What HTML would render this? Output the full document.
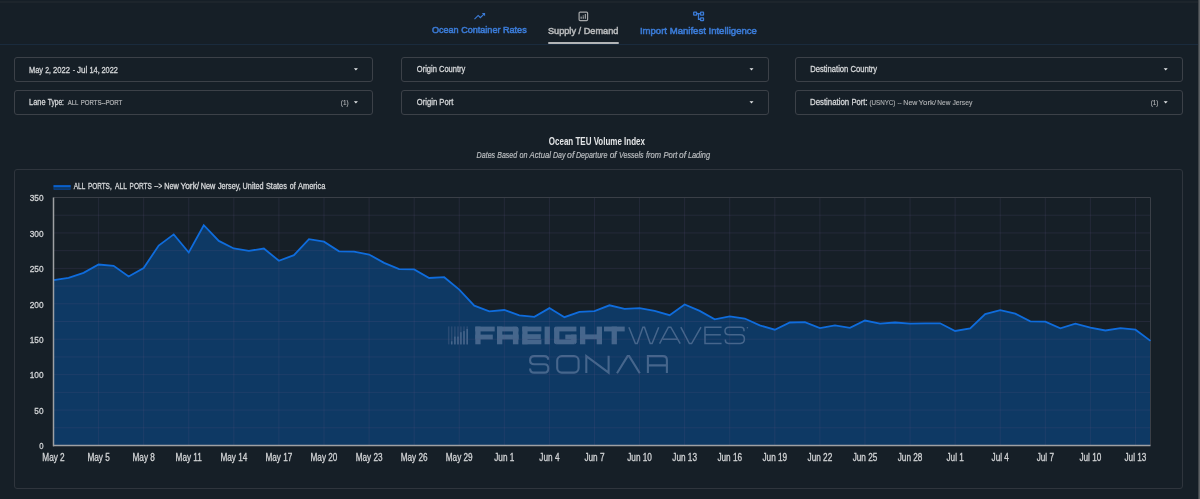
<!DOCTYPE html>
<html><head><meta charset="utf-8">
<style>
html,body{margin:0;padding:0;}
body{width:1200px;height:499px;overflow:hidden;background:#161f27;position:relative;font-family:"Liberation Sans",sans-serif;}
.topline{position:absolute;left:0;top:1px;width:1200px;height:2px;background:#1d252c;}
.navsep{position:absolute;left:0;top:44px;width:1200px;height:1px;background:#1a2b3d;}
.uline{position:absolute;left:548px;top:41.5px;width:71px;height:2.5px;border-radius:2px;background:#b2b4b6;}
.box{position:absolute;box-sizing:border-box;border:1.4px solid #3c4148;border-radius:3px;}
.card{position:absolute;box-sizing:border-box;border:1px solid #2f353d;border-radius:3px;left:13.5px;top:169px;width:1169.5px;height:320px;}
.sb{position:absolute;left:1198px;top:0;width:2px;height:499px;background:linear-gradient(90deg,#2c3237 0%,#5c6064 60%,#5c6064 100%);}
svg{position:absolute;left:0;top:0;will-change:transform;}

</style></head>
<body>
<div class="topline"></div>
<div class="navsep"></div>
<div class="uline"></div>
<div class="box" style="left:13.5px;top:57px;width:359.5px;height:25px"></div>
<div class="box" style="left:13.5px;top:90px;width:359.5px;height:25px"></div>
<div class="box" style="left:401px;top:57px;width:368px;height:25px"></div>
<div class="box" style="left:401px;top:90px;width:368px;height:25px"></div>
<div class="box" style="left:794.5px;top:57px;width:388.5px;height:25px"></div>
<div class="box" style="left:794.5px;top:90px;width:388.5px;height:25px"></div>
<div class="card"></div>
<div class="sb"></div>
<svg width="1200" height="499" viewBox="0 0 1200 499" style="font-family:'Liberation Sans',sans-serif">
<!-- nav icons -->
<path transform="translate(473.0,9.6) scale(0.55)" fill="#3b7bd6" d="M16 6l2.29 2.29-4.88 4.88-4-4L2 16.59 3.41 18l6-6 4 4 6.3-6.29L22 12V6z"/>
<rect x="579.1" y="12.1" width="8.5" height="8.5" rx="1" fill="none" stroke="#a6a8aa" stroke-width="1.2"/>
<g fill="#a6a8aa"><rect x="580.6" y="16.6" width="1.1" height="2.2"/><rect x="582.7" y="15.2" width="1.1" height="0.6"/><rect x="582.7" y="16.3" width="1.1" height="2.5"/><rect x="584.8" y="14.0" width="1.1" height="4.8"/></g>
<g fill="none" stroke="#3b7bd6" stroke-width="1.3">
<rect x="693.7" y="12.2" width="2.9" height="2.9" rx="0.4"/>
<rect x="700.6" y="12.2" width="2.9" height="2.9" rx="0.4"/>
<rect x="700.6" y="17.8" width="2.9" height="2.9" rx="0.4"/>
<polyline points="696.6,13.65 700.6,13.65"/>
<polyline points="698.5,13.65 698.5,19.25 700.6,19.25"/>
</g>
<text x="431.9" y="33.4" textLength="94.8" lengthAdjust="spacingAndGlyphs" fill="#3b7bd6" font-size="9.6" font-weight="normal" font-style="normal" text-anchor="start" stroke="#3b7bd6" stroke-width="0.55">Ocean Container Rates</text>
<text x="547.9" y="33.5" textLength="70.5" lengthAdjust="spacingAndGlyphs" fill="#b6b8ba" font-size="9.6" font-weight="normal" font-style="normal" text-anchor="start" stroke="#b6b8ba" stroke-width="0.55">Supply / Demand</text>
<text x="639.9" y="33.5" textLength="117" lengthAdjust="spacingAndGlyphs" fill="#3b7bd6" font-size="9.6" font-weight="normal" font-style="normal" text-anchor="start" stroke="#3b7bd6" stroke-width="0.55">Import Manifest Intelligence</text>
<!-- dropdown texts -->
<text x="29.0" y="72.5" textLength="14.0" lengthAdjust="spacingAndGlyphs" fill="#d6d8da" font-size="9.3" font-weight="normal" font-style="normal" text-anchor="start" stroke="#d6d8da" stroke-width="0.3">May</text>
<text x="45.2" y="72.5" textLength="5.7" lengthAdjust="spacingAndGlyphs" fill="#d6d8da" font-size="9.3" font-weight="normal" font-style="normal" text-anchor="start" stroke="#d6d8da" stroke-width="0.3">2,</text>
<text x="53.1" y="72.5" textLength="17.0" lengthAdjust="spacingAndGlyphs" fill="#d6d8da" font-size="9.3" font-weight="normal" font-style="normal" text-anchor="start" stroke="#d6d8da" stroke-width="0.3">2022</text>
<text x="72.7" y="72.5" textLength="2.4" lengthAdjust="spacingAndGlyphs" fill="#d6d8da" font-size="9.3" font-weight="normal" font-style="normal" text-anchor="start" stroke="#d6d8da" stroke-width="0.3">-</text>
<text x="76.9" y="72.5" textLength="10.3" lengthAdjust="spacingAndGlyphs" fill="#d6d8da" font-size="9.3" font-weight="normal" font-style="normal" text-anchor="start" stroke="#d6d8da" stroke-width="0.3">Jul</text>
<text x="89.4" y="72.5" textLength="10.3" lengthAdjust="spacingAndGlyphs" fill="#d6d8da" font-size="9.3" font-weight="normal" font-style="normal" text-anchor="start" stroke="#d6d8da" stroke-width="0.3">14,</text>
<text x="101.5" y="72.5" textLength="16.5" lengthAdjust="spacingAndGlyphs" fill="#d6d8da" font-size="9.3" font-weight="normal" font-style="normal" text-anchor="start" stroke="#d6d8da" stroke-width="0.3">2022</text>
<text x="29.1" y="105.2" textLength="16.4" lengthAdjust="spacingAndGlyphs" fill="#d6d8da" font-size="9" font-weight="normal" font-style="normal" text-anchor="start" stroke="#d6d8da" stroke-width="0.3">Lane</text>
<text x="47.8" y="105.2" textLength="16.1" lengthAdjust="spacingAndGlyphs" fill="#d6d8da" font-size="9" font-weight="normal" font-style="normal" text-anchor="start" stroke="#d6d8da" stroke-width="0.3">Type:</text>
<text x="67.8" y="105.2" textLength="10.6" lengthAdjust="spacingAndGlyphs" fill="#b3b5b7" font-size="8.0" font-weight="normal" font-style="normal" text-anchor="start" stroke="#b3b5b7" stroke-width="0.22">ALL</text>
<text x="80.7" y="105.2" textLength="41.6" lengthAdjust="spacingAndGlyphs" fill="#b3b5b7" font-size="8.0" font-weight="normal" font-style="normal" text-anchor="start" stroke="#b3b5b7" stroke-width="0.22">PORTS--PORT</text>
<text x="416.8" y="72.4" textLength="48.5" lengthAdjust="spacingAndGlyphs" fill="#d6d8da" font-size="8.8" font-weight="normal" font-style="normal" text-anchor="start" stroke="#d6d8da" stroke-width="0.3">Origin Country</text>
<text x="416.8" y="105.2" textLength="36.5" lengthAdjust="spacingAndGlyphs" fill="#d6d8da" font-size="8.8" font-weight="normal" font-style="normal" text-anchor="start" stroke="#d6d8da" stroke-width="0.3">Origin Port</text>
<text x="810.2" y="72.4" textLength="67" lengthAdjust="spacingAndGlyphs" fill="#d6d8da" font-size="8.8" font-weight="normal" font-style="normal" text-anchor="start" stroke="#d6d8da" stroke-width="0.3">Destination Country</text>
<text x="810.0" y="105.2" textLength="39.2" lengthAdjust="spacingAndGlyphs" fill="#d6d8da" font-size="9" font-weight="normal" font-style="normal" text-anchor="start" stroke="#d6d8da" stroke-width="0.3">Destination</text>
<text x="851.5" y="105.2" textLength="16.0" lengthAdjust="spacingAndGlyphs" fill="#d6d8da" font-size="9" font-weight="normal" font-style="normal" text-anchor="start" stroke="#d6d8da" stroke-width="0.3">Port:</text>
<text x="869.4" y="105.2" textLength="26.0" lengthAdjust="spacingAndGlyphs" fill="#b3b5b7" font-size="7.9" font-weight="normal" font-style="normal" text-anchor="start" stroke="#b3b5b7" stroke-width="0.12">(USNYC)</text>
<text x="897.4" y="105.2" textLength="4.4" lengthAdjust="spacingAndGlyphs" fill="#b3b5b7" font-size="7.9" font-weight="normal" font-style="normal" text-anchor="start" stroke="#b3b5b7" stroke-width="0.12">--</text>
<text x="903.3" y="105.2" textLength="14.1" lengthAdjust="spacingAndGlyphs" fill="#b3b5b7" font-size="7.9" font-weight="normal" font-style="normal" text-anchor="start" stroke="#b3b5b7" stroke-width="0.12">New</text>
<text x="918.5" y="105.2" textLength="17.7" lengthAdjust="spacingAndGlyphs" fill="#b3b5b7" font-size="7.9" font-weight="normal" font-style="normal" text-anchor="start" stroke="#b3b5b7" stroke-width="0.12">York/</text>
<text x="937.3" y="105.2" textLength="13.1" lengthAdjust="spacingAndGlyphs" fill="#b3b5b7" font-size="7.9" font-weight="normal" font-style="normal" text-anchor="start" stroke="#b3b5b7" stroke-width="0.12">New</text>
<text x="952.4" y="105.2" textLength="20.0" lengthAdjust="spacingAndGlyphs" fill="#b3b5b7" font-size="7.9" font-weight="normal" font-style="normal" text-anchor="start" stroke="#b3b5b7" stroke-width="0.12">Jersey</text>
<text x="340.8" y="104.6" textLength="7.8" lengthAdjust="spacingAndGlyphs" fill="#b3b5b7" font-size="7.6" font-weight="normal" font-style="normal" text-anchor="start" stroke="#b3b5b7" stroke-width="0.12">(1)</text>
<text x="1150.7" y="104.6" textLength="7.8" lengthAdjust="spacingAndGlyphs" fill="#b3b5b7" font-size="7.6" font-weight="normal" font-style="normal" text-anchor="start" stroke="#b3b5b7" stroke-width="0.12">(1)</text>
<g fill="#e6e8ea">
<polygon points="353.9,68.2 357.9,68.2 355.9,70.4"/>
<polygon points="353.9,101.2 357.9,101.2 355.9,103.4"/>
<polygon points="749.5,68.2 753.5,68.2 751.5,70.4"/>
<polygon points="749.5,101.2 753.5,101.2 751.5,103.4"/>
<polygon points="1163.7,68.2 1167.7,68.2 1165.7,70.4"/>
<polygon points="1163.7,101.2 1167.7,101.2 1165.7,103.4"/>
</g>
<!-- titles -->
<text x="548.8" y="144.8" textLength="96.2" lengthAdjust="spacingAndGlyphs" fill="#e4e6e8" font-size="10.2" font-weight="bold" font-style="normal" text-anchor="start">Ocean TEU Volume Index</text>
<text x="476.5" y="157.7" textLength="18.7" lengthAdjust="spacingAndGlyphs" fill="#bcbfc2" font-size="9.0" font-weight="normal" font-style="italic" text-anchor="start" stroke="#bcbfc2" stroke-width="0.2">Dates</text>
<text x="497.3" y="157.7" textLength="19.8" lengthAdjust="spacingAndGlyphs" fill="#bcbfc2" font-size="9.0" font-weight="normal" font-style="italic" text-anchor="start" stroke="#bcbfc2" stroke-width="0.2">Based</text>
<text x="519.5" y="157.7" textLength="8.0" lengthAdjust="spacingAndGlyphs" fill="#bcbfc2" font-size="9.0" font-weight="normal" font-style="italic" text-anchor="start" stroke="#bcbfc2" stroke-width="0.2">on</text>
<text x="529.6" y="157.7" textLength="21.4" lengthAdjust="spacingAndGlyphs" fill="#bcbfc2" font-size="9.0" font-weight="normal" font-style="italic" text-anchor="start" stroke="#bcbfc2" stroke-width="0.2">Actual</text>
<text x="553.0" y="157.7" textLength="12.5" lengthAdjust="spacingAndGlyphs" fill="#bcbfc2" font-size="9.0" font-weight="normal" font-style="italic" text-anchor="start" stroke="#bcbfc2" stroke-width="0.2">Day</text>
<text x="567.1" y="157.7" textLength="7.3" lengthAdjust="spacingAndGlyphs" fill="#bcbfc2" font-size="9.0" font-weight="normal" font-style="italic" text-anchor="start" stroke="#bcbfc2" stroke-width="0.2">of</text>
<text x="575.9" y="157.7" textLength="31.5" lengthAdjust="spacingAndGlyphs" fill="#bcbfc2" font-size="9.0" font-weight="normal" font-style="italic" text-anchor="start" stroke="#bcbfc2" stroke-width="0.2">Departure</text>
<text x="609.7" y="157.7" textLength="7.0" lengthAdjust="spacingAndGlyphs" fill="#bcbfc2" font-size="9.0" font-weight="normal" font-style="italic" text-anchor="start" stroke="#bcbfc2" stroke-width="0.2">of</text>
<text x="619.0" y="157.7" textLength="24.5" lengthAdjust="spacingAndGlyphs" fill="#bcbfc2" font-size="9.0" font-weight="normal" font-style="italic" text-anchor="start" stroke="#bcbfc2" stroke-width="0.2">Vessels</text>
<text x="645.9" y="157.7" textLength="15.1" lengthAdjust="spacingAndGlyphs" fill="#bcbfc2" font-size="9.0" font-weight="normal" font-style="italic" text-anchor="start" stroke="#bcbfc2" stroke-width="0.2">from</text>
<text x="663.4" y="157.7" textLength="14.0" lengthAdjust="spacingAndGlyphs" fill="#bcbfc2" font-size="9.0" font-weight="normal" font-style="italic" text-anchor="start" stroke="#bcbfc2" stroke-width="0.2">Port</text>
<text x="679.1" y="157.7" textLength="7.0" lengthAdjust="spacingAndGlyphs" fill="#bcbfc2" font-size="9.0" font-weight="normal" font-style="italic" text-anchor="start" stroke="#bcbfc2" stroke-width="0.2">of</text>
<text x="687.9" y="157.7" textLength="22.2" lengthAdjust="spacingAndGlyphs" fill="#bcbfc2" font-size="9.0" font-weight="normal" font-style="italic" text-anchor="start" stroke="#bcbfc2" stroke-width="0.2">Lading</text>
<!-- legend -->
<rect x="53.9" y="185.6" width="16.3" height="4.0" fill="#0e3866" stroke="#0b4590" stroke-width="0.7"/>
<rect x="53.6" y="185.2" width="16.9" height="1.9" fill="#0a60cc"/>
<text x="73.8" y="188.9" textLength="11.4" lengthAdjust="spacingAndGlyphs" fill="#d6d8da" font-size="8.4" font-weight="normal" font-style="normal" text-anchor="start" stroke="#d6d8da" stroke-width="0.3">ALL</text>
<text x="87.9" y="188.9" textLength="23.8" lengthAdjust="spacingAndGlyphs" fill="#d6d8da" font-size="8.4" font-weight="normal" font-style="normal" text-anchor="start" stroke="#d6d8da" stroke-width="0.3">PORTS,</text>
<text x="115" y="188.9" textLength="11.9" lengthAdjust="spacingAndGlyphs" fill="#d6d8da" font-size="8.4" font-weight="normal" font-style="normal" text-anchor="start" stroke="#d6d8da" stroke-width="0.3">ALL</text>
<text x="129.6" y="188.9" textLength="22.2" lengthAdjust="spacingAndGlyphs" fill="#d6d8da" font-size="8.4" font-weight="normal" font-style="normal" text-anchor="start" stroke="#d6d8da" stroke-width="0.3">PORTS</text>
<text x="154.2" y="188.9" textLength="7.9" lengthAdjust="spacingAndGlyphs" fill="#d6d8da" font-size="8.4" font-weight="normal" font-style="normal" text-anchor="start" stroke="#d6d8da" stroke-width="0.3">--&gt;</text>
<text x="164.2" y="188.9" textLength="14.6" lengthAdjust="spacingAndGlyphs" fill="#d6d8da" font-size="8.4" font-weight="normal" font-style="normal" text-anchor="start" stroke="#d6d8da" stroke-width="0.3">New</text>
<text x="180.4" y="188.9" textLength="18.8" lengthAdjust="spacingAndGlyphs" fill="#d6d8da" font-size="8.4" font-weight="normal" font-style="normal" text-anchor="start" stroke="#d6d8da" stroke-width="0.3">York/</text>
<text x="200.8" y="188.9" textLength="14.6" lengthAdjust="spacingAndGlyphs" fill="#d6d8da" font-size="8.4" font-weight="normal" font-style="normal" text-anchor="start" stroke="#d6d8da" stroke-width="0.3">New</text>
<text x="217.9" y="188.9" textLength="22.9" lengthAdjust="spacingAndGlyphs" fill="#d6d8da" font-size="8.4" font-weight="normal" font-style="normal" text-anchor="start" stroke="#d6d8da" stroke-width="0.3">Jersey,</text>
<text x="242.6" y="188.9" textLength="21.0" lengthAdjust="spacingAndGlyphs" fill="#d6d8da" font-size="8.4" font-weight="normal" font-style="normal" text-anchor="start" stroke="#d6d8da" stroke-width="0.3">United</text>
<text x="265.9" y="188.9" textLength="21.0" lengthAdjust="spacingAndGlyphs" fill="#d6d8da" font-size="8.4" font-weight="normal" font-style="normal" text-anchor="start" stroke="#d6d8da" stroke-width="0.3">States</text>
<text x="289.8" y="188.9" textLength="5.9" lengthAdjust="spacingAndGlyphs" fill="#d6d8da" font-size="8.4" font-weight="normal" font-style="normal" text-anchor="start" stroke="#d6d8da" stroke-width="0.3">of</text>
<text x="298" y="188.9" textLength="27.4" lengthAdjust="spacingAndGlyphs" fill="#d6d8da" font-size="8.4" font-weight="normal" font-style="normal" text-anchor="start" stroke="#d6d8da" stroke-width="0.3">America</text>
<!-- plot -->
<path d="M53.5,445.5 L53.50,280.20 L68.53,277.80 L83.55,272.80 L98.58,264.50 L113.61,265.80 L128.64,276.50 L143.66,268.00 L158.69,245.60 L173.72,234.40 L188.75,252.50 L203.77,225.20 L218.80,240.90 L233.83,248.50 L248.86,250.90 L263.88,248.50 L278.91,260.80 L293.94,255.20 L308.97,239.20 L323.99,241.70 L339.02,251.30 L354.05,251.60 L369.08,254.50 L384.10,262.90 L399.13,269.20 L414.16,269.40 L429.18,278.00 L444.21,277.20 L459.24,289.60 L474.27,305.70 L489.29,311.30 L504.32,310.00 L519.35,315.30 L534.38,316.90 L549.40,308.10 L564.43,317.20 L579.46,311.80 L594.49,311.20 L609.51,305.30 L624.54,308.90 L639.57,308.10 L654.60,310.90 L669.62,315.20 L684.65,304.50 L699.68,310.90 L714.71,319.40 L729.73,316.40 L744.76,318.50 L759.79,325.40 L774.82,329.70 L789.84,322.50 L804.87,322.10 L819.90,328.10 L834.92,325.40 L849.95,327.80 L864.98,320.50 L880.01,323.60 L895.03,322.50 L910.06,323.70 L925.09,323.30 L940.12,323.30 L955.14,331.00 L970.17,328.50 L985.20,314.10 L1000.23,310.10 L1015.25,313.70 L1030.28,321.30 L1045.31,321.60 L1060.34,328.40 L1075.36,323.60 L1090.39,327.60 L1105.42,330.50 L1120.45,328.10 L1135.47,329.70 L1150.50,340.90 L1150.5,445.5 Z" fill="#0e3964"/>
<!-- watermark -->
<g fill="#46668c"><rect x="475.3" y="326.6" width="5.3" height="17.7"/><rect x="475.3" y="326.6" width="19.4" height="4.8"/><rect x="475.3" y="334.6" width="17.5" height="4.8"/><rect x="497.0" y="326.6" width="5.3" height="17.7"/><rect x="497.0" y="326.6" width="16.0" height="4.8"/><rect x="497.0" y="334.6" width="21.4" height="4.8"/><rect x="512.9" y="328.6" width="5.5" height="10.8"/><rect x="512.9" y="334.6" width="5.5" height="9.7"/><rect x="522.3" y="326.6" width="5.3" height="17.7"/><rect x="522.3" y="326.6" width="19.1" height="4.8"/><rect x="522.3" y="334.2" width="18.5" height="4.8"/><rect x="522.3" y="339.5" width="19.1" height="4.8"/><rect x="544.6" y="326.6" width="5.3" height="17.7"/><rect x="554.1" y="328.1" width="5.3" height="14.7"/><rect x="556.1" y="326.6" width="20.3" height="4.8"/><rect x="556.1" y="339.5" width="18.3" height="4.8"/><rect x="571.1" y="334.6" width="5.3" height="8.2"/><rect x="565.3" y="334.6" width="11.1" height="4.8"/><rect x="580.0" y="326.6" width="5.3" height="17.7"/><rect x="596.7" y="326.6" width="5.3" height="17.7"/><rect x="580.0" y="334.4" width="22.0" height="4.8"/><rect x="604.0" y="326.6" width="20.7" height="4.8"/><rect x="611.6" y="326.6" width="5.3" height="17.7"/><path d="M554.1,328.6 Q554.1,326.6 556.1,326.6 L556.1,331.4 L554.1,331.4Z"/><path d="M554.1,342.3 Q554.1,344.3 556.1,344.3 L556.1,339 L554.1,339Z"/><path d="M512.9,326.6 L516.4,326.6 Q518.4,326.6 518.4,328.6 L518.4,331.4 L512.9,331.4Z"/><path d="M574.4,339 L576.4,339 L576.4,342.3 Q576.4,344.3 574.4,344.3Z"/></g>
<rect x="447.95" y="326.4" width="1.5" height="18" fill="#284a73"/><rect x="450.95" y="326.4" width="1.5" height="18" fill="#284a73"/><rect x="450.95" y="341.3" width="1.5" height="3.1" fill="#46668c"/><rect x="454.15" y="326.4" width="1.5" height="18" fill="#284a73"/><rect x="454.15" y="336.6" width="1.5" height="7.8" fill="#46668c"/><rect x="457.25" y="326.4" width="1.5" height="18" fill="#284a73"/><rect x="457.25" y="336.6" width="1.5" height="7.8" fill="#46668c"/><rect x="460.15" y="326.4" width="1.5" height="18" fill="#284a73"/><rect x="460.15" y="332.2" width="1.5" height="12.2" fill="#46668c"/><rect x="463.25" y="326.4" width="1.5" height="18" fill="#284a73"/><rect x="463.25" y="331.1" width="1.5" height="13.3" fill="#46668c"/><rect x="466.45" y="326.4" width="1.5" height="18" fill="#284a73"/><rect x="466.45" y="329.0" width="1.5" height="15.4" fill="#46668c"/>
<g fill="none" stroke="#46668c" stroke-width="1.5"><polyline points="628.9,327.2 635.4,343.6 637.2,343.6 642.9,327.2 644.5,327.2 650.2,343.6 652.1,343.6 658.7,327.2"/><polyline points="659.6,343.6 668.4,327.2 670.8,327.2 680.2,343.6"/><line x1="662.8" y1="339.2" x2="677.6" y2="339.2"/><polyline points="680.8,327.2 689.4,343.6 691.6,343.6 701.0,327.2"/><polyline points="721.6,327.2 705.0,327.2 705.0,343.6 721.6,343.6"/><line x1="705" y1="334.8" x2="720.8" y2="334.8"/><path d="M744.0,331.3 L744.0,330.2 Q744.0,327.2 741.0,327.2 L729.0,327.2 Q725.0,327.2 725.0,331.0 Q725.0,334.8 729.0,334.8 L740.4,334.8 Q744.4,334.8 744.4,339.1 Q744.4,343.4 740.4,343.4 L728.4,343.4 Q725.4,343.4 725.4,340.6 L725.4,339.4"/></g>
<circle cx="747.4" cy="327.8" r="0.8" fill="#46668c"/>
<g fill="none" stroke="#46668c" stroke-width="2.1"><path d="M548.2,359.7 Q548.2,356.1 544.2,356.1 L534.2,356.1 Q530.1,356.1 530.1,360.2 Q530.1,364.3 534.2,364.3 L544.2,364.3 Q548.3,364.3 548.3,368.4 Q548.3,372.6 544.2,372.6 L534.2,372.6 Q530.1,372.6 530.1,368.4"/><rect x="557.2" y="356.1" width="21.4" height="16.5" rx="4.5"/><polyline points="586.3,373.0 586.3,356.1 608.6,372.6 608.6,355.70000000000005"/><polyline points="617.0,373.20000000000005 627.6,356.1 629.2,356.1 639.8,373.20000000000005"/><path d="M647.9,373.0 L647.9,356.1 L663.0,356.1 Q666.9,356.1 666.9,360.0 L666.9,373.0 M647.9,365.4 L666.9,365.4"/></g>
<g stroke="rgba(95,85,130,0.2)" stroke-width="1">
<line x1="53.5" y1="427.79" x2="1150.5" y2="427.79"/>
<line x1="53.5" y1="410.07" x2="1150.5" y2="410.07"/>
<line x1="53.5" y1="392.36" x2="1150.5" y2="392.36"/>
<line x1="53.5" y1="374.64" x2="1150.5" y2="374.64"/>
<line x1="53.5" y1="356.93" x2="1150.5" y2="356.93"/>
<line x1="53.5" y1="339.21" x2="1150.5" y2="339.21"/>
<line x1="53.5" y1="321.50" x2="1150.5" y2="321.50"/>
<line x1="53.5" y1="303.79" x2="1150.5" y2="303.79"/>
<line x1="53.5" y1="286.07" x2="1150.5" y2="286.07"/>
<line x1="53.5" y1="268.36" x2="1150.5" y2="268.36"/>
<line x1="53.5" y1="250.64" x2="1150.5" y2="250.64"/>
<line x1="53.5" y1="232.93" x2="1150.5" y2="232.93"/>
<line x1="53.5" y1="215.21" x2="1150.5" y2="215.21"/>
<line x1="98.58" y1="197.5" x2="98.58" y2="445.5"/>
<line x1="143.66" y1="197.5" x2="143.66" y2="445.5"/>
<line x1="188.75" y1="197.5" x2="188.75" y2="445.5"/>
<line x1="233.83" y1="197.5" x2="233.83" y2="445.5"/>
<line x1="278.91" y1="197.5" x2="278.91" y2="445.5"/>
<line x1="323.99" y1="197.5" x2="323.99" y2="445.5"/>
<line x1="369.08" y1="197.5" x2="369.08" y2="445.5"/>
<line x1="414.16" y1="197.5" x2="414.16" y2="445.5"/>
<line x1="459.24" y1="197.5" x2="459.24" y2="445.5"/>
<line x1="504.32" y1="197.5" x2="504.32" y2="445.5"/>
<line x1="549.40" y1="197.5" x2="549.40" y2="445.5"/>
<line x1="594.49" y1="197.5" x2="594.49" y2="445.5"/>
<line x1="639.57" y1="197.5" x2="639.57" y2="445.5"/>
<line x1="684.65" y1="197.5" x2="684.65" y2="445.5"/>
<line x1="729.73" y1="197.5" x2="729.73" y2="445.5"/>
<line x1="774.82" y1="197.5" x2="774.82" y2="445.5"/>
<line x1="819.90" y1="197.5" x2="819.90" y2="445.5"/>
<line x1="864.98" y1="197.5" x2="864.98" y2="445.5"/>
<line x1="910.06" y1="197.5" x2="910.06" y2="445.5"/>
<line x1="955.14" y1="197.5" x2="955.14" y2="445.5"/>
<line x1="1000.23" y1="197.5" x2="1000.23" y2="445.5"/>
<line x1="1045.31" y1="197.5" x2="1045.31" y2="445.5"/>
<line x1="1090.39" y1="197.5" x2="1090.39" y2="445.5"/>
<line x1="1135.47" y1="197.5" x2="1135.47" y2="445.5"/>
</g>
<line x1="53.5" y1="197.5" x2="1150.5" y2="197.5" stroke="#3a3f47" stroke-width="1"/>
<line x1="1150.5" y1="197.5" x2="1150.5" y2="445.5" stroke="#3a3f47" stroke-width="1"/>
<polyline points="53.50,280.20 68.53,277.80 83.55,272.80 98.58,264.50 113.61,265.80 128.64,276.50 143.66,268.00 158.69,245.60 173.72,234.40 188.75,252.50 203.77,225.20 218.80,240.90 233.83,248.50 248.86,250.90 263.88,248.50 278.91,260.80 293.94,255.20 308.97,239.20 323.99,241.70 339.02,251.30 354.05,251.60 369.08,254.50 384.10,262.90 399.13,269.20 414.16,269.40 429.18,278.00 444.21,277.20 459.24,289.60 474.27,305.70 489.29,311.30 504.32,310.00 519.35,315.30 534.38,316.90 549.40,308.10 564.43,317.20 579.46,311.80 594.49,311.20 609.51,305.30 624.54,308.90 639.57,308.10 654.60,310.90 669.62,315.20 684.65,304.50 699.68,310.90 714.71,319.40 729.73,316.40 744.76,318.50 759.79,325.40 774.82,329.70 789.84,322.50 804.87,322.10 819.90,328.10 834.92,325.40 849.95,327.80 864.98,320.50 880.01,323.60 895.03,322.50 910.06,323.70 925.09,323.30 940.12,323.30 955.14,331.00 970.17,328.50 985.20,314.10 1000.23,310.10 1015.25,313.70 1030.28,321.30 1045.31,321.60 1060.34,328.40 1075.36,323.60 1090.39,327.60 1105.42,330.50 1120.45,328.10 1135.47,329.70 1150.50,340.90" fill="none" stroke="#0f6cdc" stroke-width="1.8" stroke-linejoin="miter"/>
<line x1="53.5" y1="197.5" x2="53.5" y2="446.3" stroke="#9ea0a3" stroke-width="1.5"/>
<line x1="53.0" y1="445.5" x2="1150.5" y2="445.5" stroke="#9ea0a3" stroke-width="1.5"/>
<text x="43.5" y="449.30" textLength="4.3" lengthAdjust="spacingAndGlyphs" fill="#d2d4d6" font-size="9.8" font-weight="normal" font-style="normal" text-anchor="end" stroke="#d2d4d6" stroke-width="0.3">0</text>
<text x="43.5" y="413.87" textLength="9.2" lengthAdjust="spacingAndGlyphs" fill="#d2d4d6" font-size="9.8" font-weight="normal" font-style="normal" text-anchor="end" stroke="#d2d4d6" stroke-width="0.3">50</text>
<text x="43.5" y="378.44" textLength="13.8" lengthAdjust="spacingAndGlyphs" fill="#d2d4d6" font-size="9.8" font-weight="normal" font-style="normal" text-anchor="end" stroke="#d2d4d6" stroke-width="0.3">100</text>
<text x="43.5" y="343.01" textLength="13.8" lengthAdjust="spacingAndGlyphs" fill="#d2d4d6" font-size="9.8" font-weight="normal" font-style="normal" text-anchor="end" stroke="#d2d4d6" stroke-width="0.3">150</text>
<text x="43.5" y="307.59" textLength="13.8" lengthAdjust="spacingAndGlyphs" fill="#d2d4d6" font-size="9.8" font-weight="normal" font-style="normal" text-anchor="end" stroke="#d2d4d6" stroke-width="0.3">200</text>
<text x="43.5" y="272.16" textLength="13.8" lengthAdjust="spacingAndGlyphs" fill="#d2d4d6" font-size="9.8" font-weight="normal" font-style="normal" text-anchor="end" stroke="#d2d4d6" stroke-width="0.3">250</text>
<text x="43.5" y="236.73" textLength="13.8" lengthAdjust="spacingAndGlyphs" fill="#d2d4d6" font-size="9.8" font-weight="normal" font-style="normal" text-anchor="end" stroke="#d2d4d6" stroke-width="0.3">300</text>
<text x="43.5" y="201.30" textLength="13.8" lengthAdjust="spacingAndGlyphs" fill="#d2d4d6" font-size="9.8" font-weight="normal" font-style="normal" text-anchor="end" stroke="#d2d4d6" stroke-width="0.3">350</text>
<text x="53.50" y="460.8" textLength="22.4" lengthAdjust="spacingAndGlyphs" fill="#d2d4d6" font-size="10.2" font-weight="normal" font-style="normal" text-anchor="middle" stroke="#d2d4d6" stroke-width="0.3">May 2</text>
<text x="98.58" y="460.8" textLength="22.4" lengthAdjust="spacingAndGlyphs" fill="#d2d4d6" font-size="10.2" font-weight="normal" font-style="normal" text-anchor="middle" stroke="#d2d4d6" stroke-width="0.3">May 5</text>
<text x="143.66" y="460.8" textLength="22.4" lengthAdjust="spacingAndGlyphs" fill="#d2d4d6" font-size="10.2" font-weight="normal" font-style="normal" text-anchor="middle" stroke="#d2d4d6" stroke-width="0.3">May 8</text>
<text x="188.75" y="460.8" textLength="26.3" lengthAdjust="spacingAndGlyphs" fill="#d2d4d6" font-size="10.2" font-weight="normal" font-style="normal" text-anchor="middle" stroke="#d2d4d6" stroke-width="0.3">May 11</text>
<text x="233.83" y="460.8" textLength="26.9" lengthAdjust="spacingAndGlyphs" fill="#d2d4d6" font-size="10.2" font-weight="normal" font-style="normal" text-anchor="middle" stroke="#d2d4d6" stroke-width="0.3">May 14</text>
<text x="278.91" y="460.8" textLength="26.9" lengthAdjust="spacingAndGlyphs" fill="#d2d4d6" font-size="10.2" font-weight="normal" font-style="normal" text-anchor="middle" stroke="#d2d4d6" stroke-width="0.3">May 17</text>
<text x="323.99" y="460.8" textLength="26.9" lengthAdjust="spacingAndGlyphs" fill="#d2d4d6" font-size="10.2" font-weight="normal" font-style="normal" text-anchor="middle" stroke="#d2d4d6" stroke-width="0.3">May 20</text>
<text x="369.08" y="460.8" textLength="26.9" lengthAdjust="spacingAndGlyphs" fill="#d2d4d6" font-size="10.2" font-weight="normal" font-style="normal" text-anchor="middle" stroke="#d2d4d6" stroke-width="0.3">May 23</text>
<text x="414.16" y="460.8" textLength="26.9" lengthAdjust="spacingAndGlyphs" fill="#d2d4d6" font-size="10.2" font-weight="normal" font-style="normal" text-anchor="middle" stroke="#d2d4d6" stroke-width="0.3">May 26</text>
<text x="459.24" y="460.8" textLength="26.9" lengthAdjust="spacingAndGlyphs" fill="#d2d4d6" font-size="10.2" font-weight="normal" font-style="normal" text-anchor="middle" stroke="#d2d4d6" stroke-width="0.3">May 29</text>
<text x="504.32" y="460.8" textLength="20.1" lengthAdjust="spacingAndGlyphs" fill="#d2d4d6" font-size="10.2" font-weight="normal" font-style="normal" text-anchor="middle" stroke="#d2d4d6" stroke-width="0.3">Jun 1</text>
<text x="549.40" y="460.8" textLength="20.1" lengthAdjust="spacingAndGlyphs" fill="#d2d4d6" font-size="10.2" font-weight="normal" font-style="normal" text-anchor="middle" stroke="#d2d4d6" stroke-width="0.3">Jun 4</text>
<text x="594.49" y="460.8" textLength="20.1" lengthAdjust="spacingAndGlyphs" fill="#d2d4d6" font-size="10.2" font-weight="normal" font-style="normal" text-anchor="middle" stroke="#d2d4d6" stroke-width="0.3">Jun 7</text>
<text x="639.57" y="460.8" textLength="24.7" lengthAdjust="spacingAndGlyphs" fill="#d2d4d6" font-size="10.2" font-weight="normal" font-style="normal" text-anchor="middle" stroke="#d2d4d6" stroke-width="0.3">Jun 10</text>
<text x="684.65" y="460.8" textLength="24.7" lengthAdjust="spacingAndGlyphs" fill="#d2d4d6" font-size="10.2" font-weight="normal" font-style="normal" text-anchor="middle" stroke="#d2d4d6" stroke-width="0.3">Jun 13</text>
<text x="729.73" y="460.8" textLength="24.7" lengthAdjust="spacingAndGlyphs" fill="#d2d4d6" font-size="10.2" font-weight="normal" font-style="normal" text-anchor="middle" stroke="#d2d4d6" stroke-width="0.3">Jun 16</text>
<text x="774.82" y="460.8" textLength="24.7" lengthAdjust="spacingAndGlyphs" fill="#d2d4d6" font-size="10.2" font-weight="normal" font-style="normal" text-anchor="middle" stroke="#d2d4d6" stroke-width="0.3">Jun 19</text>
<text x="819.90" y="460.8" textLength="24.7" lengthAdjust="spacingAndGlyphs" fill="#d2d4d6" font-size="10.2" font-weight="normal" font-style="normal" text-anchor="middle" stroke="#d2d4d6" stroke-width="0.3">Jun 22</text>
<text x="864.98" y="460.8" textLength="24.7" lengthAdjust="spacingAndGlyphs" fill="#d2d4d6" font-size="10.2" font-weight="normal" font-style="normal" text-anchor="middle" stroke="#d2d4d6" stroke-width="0.3">Jun 25</text>
<text x="910.06" y="460.8" textLength="24.7" lengthAdjust="spacingAndGlyphs" fill="#d2d4d6" font-size="10.2" font-weight="normal" font-style="normal" text-anchor="middle" stroke="#d2d4d6" stroke-width="0.3">Jun 28</text>
<text x="955.14" y="460.8" textLength="17.3" lengthAdjust="spacingAndGlyphs" fill="#d2d4d6" font-size="10.2" font-weight="normal" font-style="normal" text-anchor="middle" stroke="#d2d4d6" stroke-width="0.3">Jul 1</text>
<text x="1000.23" y="460.8" textLength="17.3" lengthAdjust="spacingAndGlyphs" fill="#d2d4d6" font-size="10.2" font-weight="normal" font-style="normal" text-anchor="middle" stroke="#d2d4d6" stroke-width="0.3">Jul 4</text>
<text x="1045.31" y="460.8" textLength="17.3" lengthAdjust="spacingAndGlyphs" fill="#d2d4d6" font-size="10.2" font-weight="normal" font-style="normal" text-anchor="middle" stroke="#d2d4d6" stroke-width="0.3">Jul 7</text>
<text x="1090.39" y="460.8" textLength="21.9" lengthAdjust="spacingAndGlyphs" fill="#d2d4d6" font-size="10.2" font-weight="normal" font-style="normal" text-anchor="middle" stroke="#d2d4d6" stroke-width="0.3">Jul 10</text>
<text x="1135.47" y="460.8" textLength="21.9" lengthAdjust="spacingAndGlyphs" fill="#d2d4d6" font-size="10.2" font-weight="normal" font-style="normal" text-anchor="middle" stroke="#d2d4d6" stroke-width="0.3">Jul 13</text>
</svg>
</body></html>
